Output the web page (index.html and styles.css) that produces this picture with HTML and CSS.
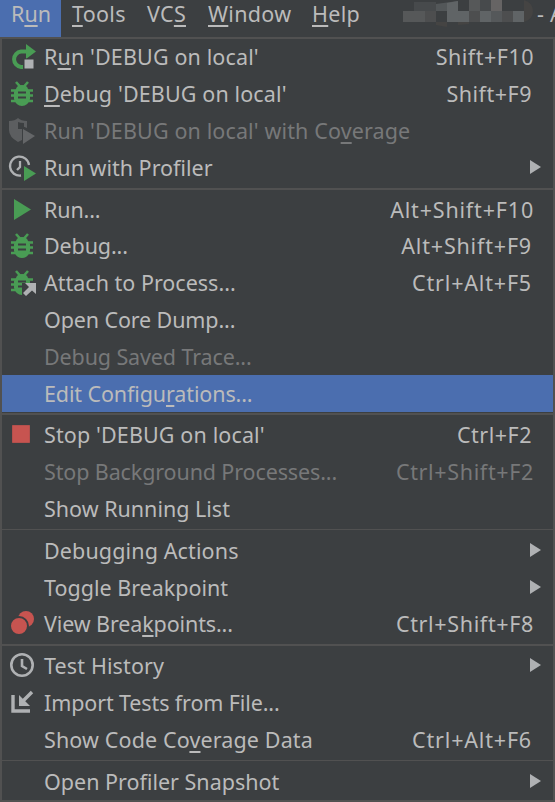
FILE: index.html
```html
<!DOCTYPE html>
<html lang="en">
<head>
<meta charset="utf-8">
<title>Run menu</title>
<link rel="stylesheet" href="styles.css">
</head>
<body>
<svg class="defs" width="0" height="0" aria-hidden="true">
  <symbol id="bug" viewBox="0 0 26 26">
    <path d="M7 1 11 5.5M19 1 15 5.500M2 9.500H24M2 14.500H24M2 20H24" fill="none" stroke="#499c54" stroke-width="2.600"/>
    <path d="M7 8Q8 4 13 4T19 8L21 11V18Q19 25 13 25T5 18V11Z" fill="#499c54"/>
    <path d="M9 11.500H17M9 16.500H17" stroke="#3c3f41" stroke-width="2"/>
  </symbol>
  <symbol id="arrow" viewBox="0 0 12 14"><path d="M0 0 11 7 0 14Z" fill="#afb1b3"/></symbol>
</svg>
<nav class="bar">
  <span class="tab active">R<u>u</u>n</span>
  <span class="tab tools"><u>T</u>ools</span>
  <span class="tab vcs">VC<u>S</u></span>
  <span class="tab window"><u>W</u>indow</span>
  <span class="tab help"><u>H</u>elp</span>
  <svg class="mosaic" width="130" height="28" viewBox="0 0 130 28">
    <path fill="#474a4c" d="M11 2H33V11H11ZM77 0H88V11H77Z"/>
    <path fill="#535759" d="M33 4 55 1V11H33Z"/>
    <path fill="#565859" d="M0 11H22V22H0ZM66 0H77V11H66Z"/>
    <path fill="#4d4e4f" d="M22 11H33V22H22ZM66 11H77V22H66ZM99 11H110V22H99Z"/>
    <path fill="#606466" d="M44 11H66V22H44ZM77 11H88V22H77ZM110 11H121V22H110ZM44 3 55 1V11H44Z"/>
    <path fill="#666464" d="M88 0H99V11H88Z"/>
    <path fill="#55585a" d="M88 11H99V22H88Z"/>
    <path fill="#454443" d="M121 0Q130 3 130 11T121 22ZM33 22H44V27L33 25ZM55 22H66V24L55 25Z"/>
  </svg>
  <span class="title">- A</span>
</nav>
<main class="menu">
  <section>
    <div class="row"><svg class="icon" viewBox="0 0 26 26"><path d="M18 7.500H12A7.800 7.800 0 0 0 12 23H14" fill="none" stroke="#499c54" stroke-width="4"/><path d="M17 0 27 7.500 17 15Z" fill="#499c54"/><path d="M15 15H25V25H15Z" fill="#afb1b3" stroke="#3c3f41"/></svg><span class="label quoted">R<u>u</u>n 'DEBUG on local'</span><kbd>Shift+F10</kbd></div>
    <div class="row"><svg class="icon"><use href="#bug"/></svg><span class="label quoted"><u>D</u>ebug 'DEBUG on local'</span><kbd class="n">Shift+F9</kbd></div>
    <div class="row off"><svg class="icon" viewBox="0 0 26 26"><path d="M0 3Q6 3 9 0 12 3 18 3V10L13 8V22L9 24Q0 19 0 12Z" fill="#5c5e60"/><path d="M9 4V11H15V5Q11 5 9 4Z" fill="#3c3f41"/><path d="M14 11 26 18 14 26Z" fill="#646668"/></svg><span class="label quoted">Run 'DEBUG on local' with Co<u>v</u>erage</span></div>
    <div class="row"><svg class="icon" viewBox="0 0 26 26"><path d="M12 20.500A9.500 9.500 0 1 1 20 10M11 6V12L8 15" fill="none" stroke="#afb1b3" stroke-width="2.300"/><path d="M15 11 27 18.500 15 26Z" fill="#499c54"/></svg><span class="label">Run with Profiler</span><svg class="more"><use href="#arrow"/></svg></div>
  </section>
  <section>
    <div class="row"><svg class="icon" viewBox="0 0 26 26"><path d="M5 2 22 12.500 5 23Z" fill="#499c54"/></svg><span class="label dots">Run...</span><kbd class="alt">Alt+Shift+F10</kbd></div>
    <div class="row"><svg class="icon"><use href="#bug"/></svg><span class="label dots">Debug...</span><kbd class="n alt">Alt+Shift+F9</kbd></div>
    <div class="row"><svg class="icon" viewBox="0 0 26 26"><use href="#bug"/><path d="M13 13H26V26H13Z" fill="#3c3f41"/><path d="M16 13H27V24L23 20.500 17 26 14 23 20 17Z" fill="#afb1b3"/></svg><span class="label">Attach to Process...</span><kbd class="n alt">Ctrl+Alt+F5</kbd></div>
    <div class="row"><span class="label dots">Open Core Dump...</span></div>
    <div class="row off"><span class="label dots">Debug Saved Trace...</span></div>
    <div class="row selected"><span class="label dots">Edit Configu<u>r</u>ations...</span></div>
  </section>
  <section>
    <div class="row"><svg class="icon" viewBox="0 0 26 26"><path d="M3.500 3.500H20.500V20.500H3.500Z" fill="#c75450" stroke="#b4504d"/></svg><span class="label quoted">Stop 'DEBUG on local'</span><kbd class="n">Ctrl+F2</kbd></div>
    <div class="row off"><span class="label dots">Stop Background Processes...</span><kbd class="wide">Ctrl+Shift+F2</kbd></div>
    <div class="row"><span class="label">Show Running List</span></div>
  </section>
  <section class="thin">
    <div class="row"><span class="label quoted">Debugging Actions</span><svg class="more"><use href="#arrow"/></svg></div>
    <div class="row"><span class="label">Toggle Breakpoint</span><svg class="more"><use href="#arrow"/></svg></div>
    <div class="row"><svg class="icon" viewBox="0 0 26 26"><circle cx="17" cy="8" r="8" fill="#c75450"/><circle cx="10" cy="15" r="9" fill="#c75450" stroke="#3c3f41" stroke-width="2"/></svg><span class="label dots">View Brea<u>k</u>points...</span><kbd class="wide">Ctrl+Shift+F8</kbd></div>
  </section>
  <section>
    <div class="row"><svg class="icon" viewBox="0 0 26 26"><circle cx="13" cy="12" r="10.700" fill="none" stroke="#afb1b3" stroke-width="2.600"/><path d="M13 6V13L18 16" fill="none" stroke="#afb1b3" stroke-width="2.600"/></svg><span class="label quoted">Test History</span><svg class="more"><use href="#arrow"/></svg></div>
    <div class="row"><svg class="icon" viewBox="0 0 26 26"><path d="M4 5V21H21M23 2 13 12" fill="none" stroke="#afb1b3" stroke-width="3.400"/><path d="M10 5V16H21Z" fill="#afb1b3"/></svg><span class="label dots">Import Tests from File...</span></div>
    <div class="row"><span class="label quoted">Show Code Co<u>v</u>erage Data</span><kbd class="n alt">Ctrl+Alt+F6</kbd></div>
  </section>
  <section class="thin">
    <div class="row"><span class="label">Open Profiler Snapshot</span><svg class="more"><use href="#arrow"/></svg></div>
  </section>
</main>
</body>
</html>
```
FILE: styles.css
```css
* { box-sizing: border-box; }
body {
  margin: 0;
  height: 802px;
  overflow: hidden;
  background: #3c3f41;
  color: #bbb;
  font: 21.5px/28px "Noto Sans", sans-serif;
}
.defs { position: absolute; }
.bar {
  display: flex;
  height: 37px;
  overflow: hidden;
  line-height: 27px;
  letter-spacing: .3px;
  white-space: pre;
}
.tab, .title { flex: none; }
.active { width: 61px; padding-left: 11px; background: #4b6eaf; letter-spacing: 0; }
.tools { width: 86px; padding-left: 11px; }
.vcs { width: 61px; }
.window { width: 104px; }
.help { width: 91px; }
.mosaic { flex: none; width: 130px; }
.title { padding-left: 4px; }
u {
  text-decoration: underline;
  text-decoration-thickness: 1.5px;
  text-underline-offset: 3px;
  text-decoration-skip-ink: none;
}
.menu {
  height: 765px;
  border: 2px solid #515151;
}
section + section {
  padding-top: 5px;
  background: linear-gradient(#515151, #515151) 0 1.5px / 100% 2px no-repeat;
}
section.thin { background-size: 100% 1px; }
.row {
  display: flex;
  align-items: center;
  height: 36.8px;
  padding: 0 19px 0 42px;
  white-space: pre;
}
.row:has(.icon) { padding-left: 7px; }
.icon { flex: none; width: 26px; height: 26px; margin-right: 9px; overflow: visible; }
.label { flex: 1; }
.quoted { letter-spacing: .13px; }
.dots { letter-spacing: -.12px; }
kbd { font: inherit; letter-spacing: .5px; }
.n { margin-right: 2px; }
.wide { letter-spacing: .65px; }
.alt { letter-spacing: .82px; }
.more { width: 12px; height: 14px; margin: -2px -8px 0 0; }
.off { color: #777879; }
.selected { background: #4b6eaf; }
```
